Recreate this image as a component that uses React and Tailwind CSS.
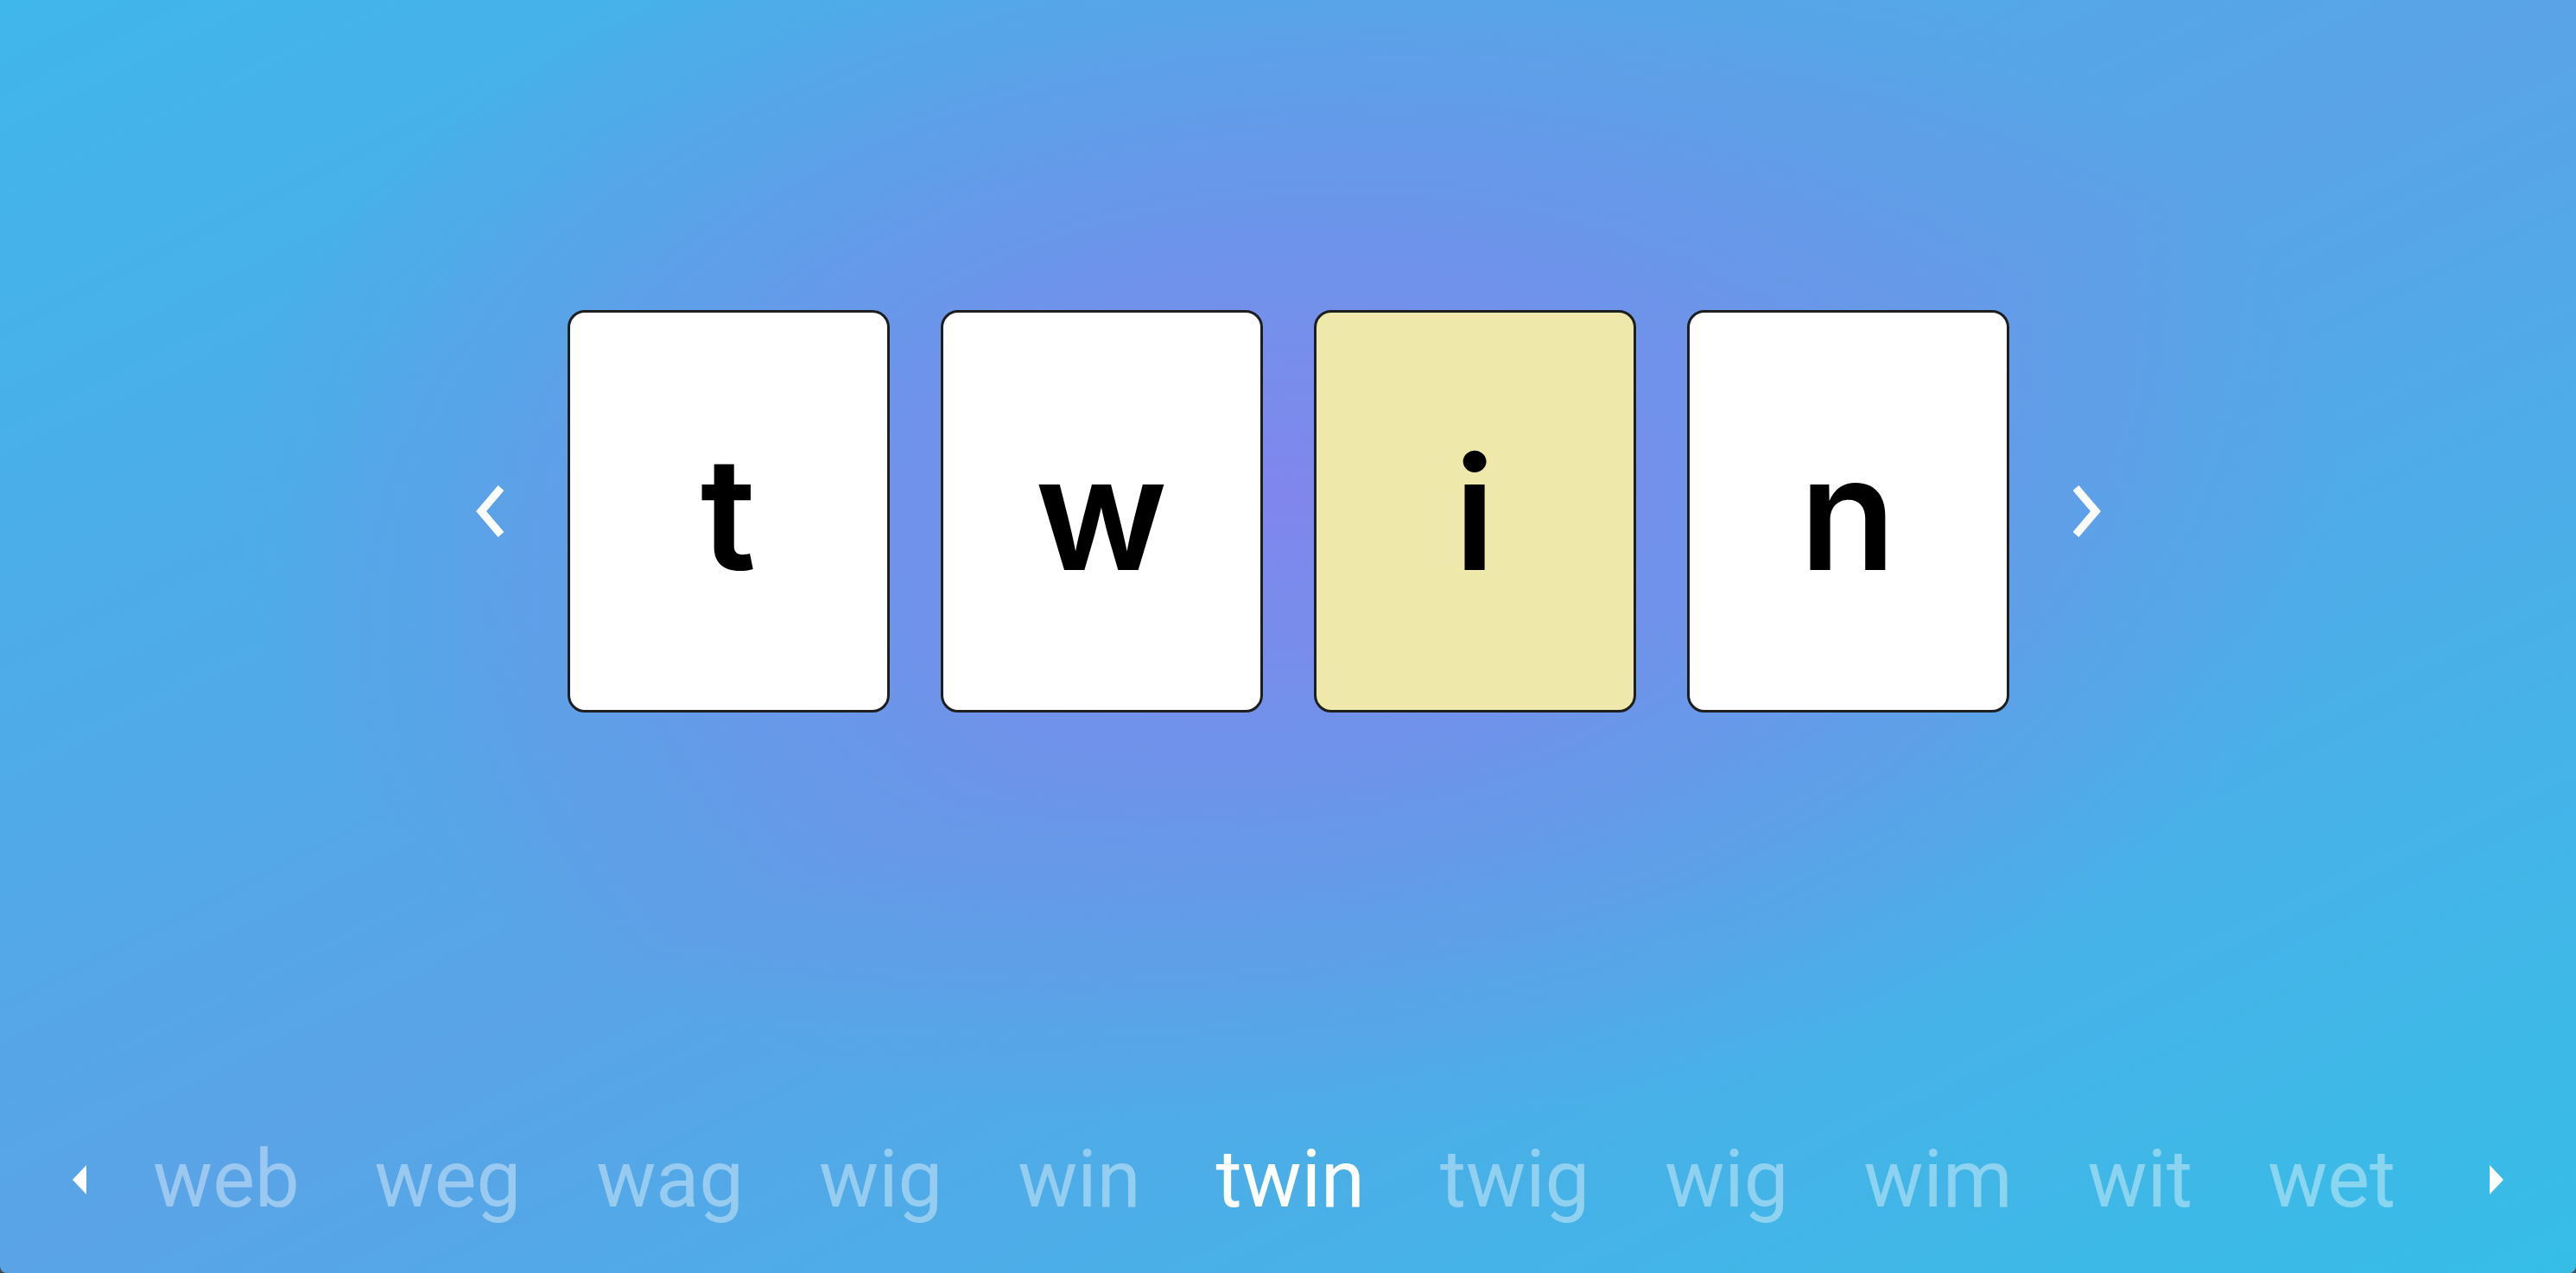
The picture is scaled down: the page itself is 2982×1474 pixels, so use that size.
import React, { useState } from 'react';

const letters = ['t', 'w', 'i', 'n'];
const words = ['web', 'weg', 'wag', 'wig', 'win', 'twin', 'twig', 'wig', 'wim', 'wit', 'wet'];

const Chevron = ({ dir }) => (
  <svg width="33" height="62" viewBox="0 0 33 62" fill="none" className="shrink-0">
    <polyline
      points={dir === 'left' ? '29,4 6,31 29,58' : '4,4 27,31 4,58'}
      stroke="white"
      strokeWidth="9"
      strokeLinejoin="miter"
    />
  </svg>
);

const Caret = ({ dir }) => (
  <svg width="16" height="34" viewBox="0 0 16 34" className="shrink-0">
    <polygon points={dir === 'left' ? '16,0 0,17 16,34' : '0,0 16,17 0,34'} fill="white" />
  </svg>
);

const App = () => {
  const [active, setActive] = useState(2);
  const [current, setCurrent] = useState(5);

  return (
    <div className="min-h-screen bg-[#4a4a4a]">
      <div className="flex h-[1474px] w-full flex-col overflow-hidden rounded-b-[8px] bg-[radial-gradient(ellipse_at_50%_39%,rgba(128,134,236,1)_0%,rgba(128,134,236,0)_58%),linear-gradient(to_bottom_right,#3fb6e9,#5aa3e7_50%,#36bee7)]">
        {/* letter cards */}
        <div className="mt-[359px] flex items-center justify-center gap-[73px]">
          <button className="cursor-pointer"><Chevron dir="left" /></button>
          <div className="flex gap-[59px]">
            {letters.map((l, i) => (
              <div
                key={i}
                onClick={() => setActive(i)}
                className={`flex h-[466px] w-[373px] items-center justify-center rounded-[20px] border-[3px] border-[#1e1e1e] ${i === active ? 'bg-[#eee8aa]' : 'bg-white'}`}
              >
                <span className="mt-[4px] font-['Inter',sans-serif] text-[182px] font-semibold leading-none text-black">{l}</span>
              </div>
            ))}
          </div>
          <button className="cursor-pointer"><Chevron dir="right" /></button>
        </div>

        {/* word strip */}
        <div className="mt-auto mb-[62px] flex items-center px-[84px]">
          <Caret dir="left" />
          <div className="ml-[77px] flex gap-[87px]">
            {words.map((w, i) => (
              <span
                key={i}
                onClick={() => setCurrent(i)}
                className={`font-['Roboto',sans-serif] text-[92px] leading-none ${i === current ? 'text-white' : 'text-white/40'}`}
              >
                {w}
              </span>
            ))}
          </div>
          <div className="ml-auto"><Caret dir="right" /></div>
        </div>
      </div>
    </div>
  );
};

export default App;
